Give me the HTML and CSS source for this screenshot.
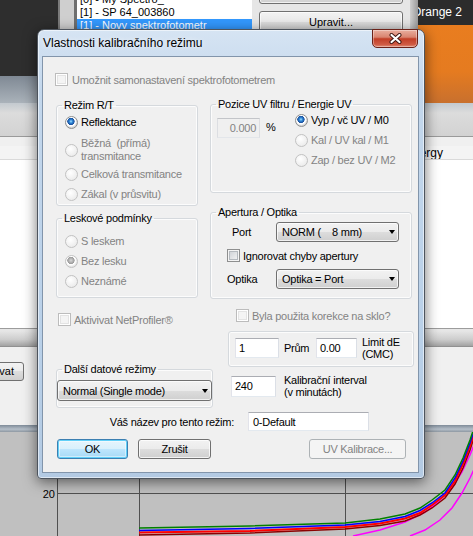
FILE: index.html
```html
<!DOCTYPE html>
<html lang="cs">
<head>
<meta charset="utf-8">
<title>Vlastnosti kalibračního režimu</title>
<link rel="stylesheet" href="styles.css">
</head>
<body>
<div class="desk">
  <div class="top">
    <div class="top-main">
      <div class="top-dark">
        <div class="dark-gap"></div>
        <div class="list-frame"></div>
        <div class="list">
          <div class="li">[0] - My Spectro_</div>
          <div class="li">[1] - SP 64_003860</div>
          <div class="li sel">[1] - Novy spektrofotometr</div>
        </div>
        <div class="btnpanel">
          <div class="bgbtn bgbtn-top"></div>
          <div class="bgbtn">Upravit...</div>
        </div>
        <div class="panel-edge"></div>
      </div>
      <div class="top-band"></div>
    </div>
    <div class="swatch">
      <div class="swatch-name">Orange 2</div>
      <div class="swatch-color"></div>
    </div>
  </div>
  <div class="toolbar"></div>
  <div class="hdr-gap"></div>
  <div class="hdr"><span class="hdr-cell">Energy</span></div>
  <div class="listarea"></div>
  <div class="band"></div>
  <div class="lower"><div class="bgbtn2">Aktualizovat</div></div>
  <div class="band2"></div>
  <div class="chart">
    <svg class="chart-svg" width="473" height="104" viewBox="0 0 473 104">
      <g stroke="#505050" stroke-width="1" fill="none">
        <line x1="57.5" y1="0" x2="57.5" y2="104"/>
        <line x1="139.5" y1="0" x2="139.5" y2="104"/>
        <line x1="345.5" y1="0" x2="345.5" y2="104"/>
        <line x1="57" y1="61.5" x2="473" y2="61.5"/>
      </g>
      <text x="55" y="66" text-anchor="end" class="axis-label">20</text>
      <g fill="none" stroke-width="1.5">
        <polyline stroke="#ff00ff" points="353,104 380,98 405,90 425,80 440,68 452,56 462,40 470,23 476,8"/>
        <polyline stroke="#ff00ff" points="410,104 425,98 440,88 452,76 462,61 470,46 476,33"/>
        <polyline stroke="#8b0000" points="139,103 250,101 345,97 380,93.5 405,89 420,83 432,76 445,66 455,52 463,36 470,18 477,-4"/>
        <polyline stroke="#ff0000" stroke-width="2" points="139,100.5 250,99 345,95 380,91.5 405,86.5 420,81 432,73 445,63 455,49 463,32 470,14 476,-4"/>
        <polyline stroke="#0000ff" points="139,98.5 250,96.5 345,93 380,89.5 405,84.5 420,78.5 432,71 445,61 455,46 463,29 470,11 475,-4"/>
        <polyline stroke="#008000" points="139,96 250,94 345,91 380,87 405,82 420,76 432,68 445,58 455,43 463,26 470,8 474,-4"/>
      </g>
    </svg>
  </div>
</div>

<div class="dialog">
  <div class="titlebar">
    <div class="title">Vlastnosti kalibračního režimu</div>
    <div class="close">
      <svg width="13" height="11" viewBox="0 0 13 11">
        <g stroke-linecap="round">
          <path d="M2.5 2 L10.5 9 M10.5 2 L2.5 9" stroke="#3b1410" stroke-width="4"/>
          <path d="M2.5 2 L10.5 9 M10.5 2 L2.5 9" stroke="#ffffff" stroke-width="2.2"/>
        </g>
      </svg>
    </div>
  </div>
  <div class="client">
    <div class="chk-row row-a dis"><span class="chk chk-dis"></span><span>Umožnit samonastavení spektrofotometrem</span></div>

    <div class="row-b">
      <fieldset class="group g-rt">
        <legend>Režim R/T</legend>
        <div class="opts opts-rt">
          <div class="opt"><span class="radio radio-on"></span><span>Reflektance</span></div>
          <div class="opt opt-two dis"><span class="radio radio-dis"></span><span class="two">Běžná&nbsp; (přímá)<br>transmitance</span></div>
          <div class="opt dis"><span class="radio radio-dis"></span><span>Celková transmitance</span></div>
          <div class="opt dis"><span class="radio radio-dis"></span><span>Zákal (v průsvitu)</span></div>
        </div>
      </fieldset>
      <fieldset class="group g-uv">
        <legend>Pozice UV filtru / Energie UV</legend>
        <div class="uv-grid">
          <div class="tb tb-dis uv-tb">0.000</div>
          <div class="pct">%</div>
          <div class="uv-opts">
            <div class="opt"><span class="radio radio-on"></span><span>Vyp / vč UV / M0</span></div>
            <div class="opt dis"><span class="radio radio-dis"></span><span>Kal / UV kal / M1</span></div>
            <div class="opt dis"><span class="radio radio-dis"></span><span>Zap / bez UV / M2</span></div>
          </div>
        </div>
      </fieldset>
    </div>

    <div class="row-c">
      <fieldset class="group g-gloss">
        <legend>Leskové podmínky</legend>
        <div class="opts opts-gloss">
          <div class="opt dis"><span class="radio radio-dis"></span><span>S leskem</span></div>
          <div class="opt dis"><span class="radio radio-dis-on"></span><span>Bez lesku</span></div>
          <div class="opt dis"><span class="radio radio-dis"></span><span>Neznámé</span></div>
        </div>
      </fieldset>
      <fieldset class="group g-ap">
        <legend>Apertura / Optika</legend>
        <div class="ap">
          <div class="ap-row">
            <span class="ap-port">Port</span>
            <div class="combo"><span class="combo-text">NORM (    8 mm)</span><span class="arrow"></span></div>
          </div>
          <div class="chk-row ap-chk"><span class="chk"></span><span>Ignorovat chyby apertury</span></div>
          <div class="ap-row ap-row2">
            <span>Optika</span>
            <div class="combo"><span class="combo-text">Optika = Port</span><span class="arrow"></span></div>
          </div>
        </div>
      </fieldset>
    </div>

    <div class="row-d">
      <div class="col-left">
        <div class="chk-row net dis"><span class="chk chk-dis"></span><span>Aktivivat NetProfiler®</span></div>
        <fieldset class="group g-data">
          <legend>Další datové režimy</legend>
          <div class="combo data-combo"><span class="combo-text">Normal (Single mode)</span><span class="arrow"></span></div>
        </fieldset>
      </div>
      <div class="col-right">
        <div class="chk-row byla dis"><span class="chk chk-dis"></span><span>Byla použita korekce na sklo?</span></div>
        <fieldset class="group g-cmc">
          <div class="cmc-grid">
            <div class="tb">1</div>
            <span class="prum">Prům</span>
            <div class="tb">0.00</div>
            <span class="lim">Limit dE<br>(CMC)</span>
          </div>
        </fieldset>
        <div class="int-row">
          <div class="tb int-tb">240</div>
          <span class="int-text">Kalibrační interval<br>(v minutách)</span>
        </div>
      </div>
    </div>

    <div class="name-row">
      <span class="name-label">Váš název pro tento režim:</span>
      <div class="tb name-tb">0-Default</div>
    </div>

    <div class="btn-row">
      <div class="btn btn-def btn-ok">OK</div>
      <div class="btn btn-cancel">Zrušit</div>
      <div class="btn btn-dis btn-uv">UV Kalibrace...</div>
    </div>
  </div>
</div>
</body>
</html>
```

FILE: styles.css
```css
* { box-sizing: border-box; }
html, body { margin: 0; padding: 0; }
body {
  width: 473px;
  height: 536px;
  overflow: hidden;
  position: relative;
  font-family: "Liberation Sans", Arial, sans-serif;
  font-size: 11px;
  color: #000;
  background: #c0c0c0;
}

/* ---------- background application ---------- */
.desk { display: flex; flex-direction: column; width: 473px; height: 536px; }
.top { display: flex; height: 103px; flex: none; }
.top-main { flex: 1; display: flex; flex-direction: column; min-width: 0; }
.top-dark { height: 76px; flex: none; display: flex; background: #2e2e2e; overflow: hidden; }
.dark-gap { width: 58px; flex: none; }
.list-frame {
  width: 19px; flex: none;
  background: linear-gradient(to right, #7b7b7b 0 2px, #cfcfcf 2px 16px, #6f6f6f 16px 19px);
}
.list { width: 175px; flex: none; background: #fff; line-height: 13px; overflow: hidden; font-size: 11px; }
.li { height: 13px; padding-left: 3px; white-space: nowrap; }
.li:first-child { margin-top: -7px; }
.li.sel { background: #3399ff; color: #fff; }
.btnpanel { width: 158px; flex: none; background: #e6e6e6; padding-left: 7px; display: flex; flex-direction: column; }
.bgbtn {
  width: 144px; height: 22px; margin-top: 7px; flex: none;
  border: 1px solid #707070; border-radius: 3px;
  background: linear-gradient(#f2f2f2, #ebebeb 50%, #dddddd 50%, #cfcfcf);
  box-shadow: inset 0 0 0 1px rgba(255,255,255,.7);
  text-align: center; line-height: 20px; font-size: 11px;
}
.bgbtn-top { margin-top: -12px; height: 16px; }
.panel-edge { width: 8px; flex: none; background: linear-gradient(to right, #cfcfcf, #9a9a9a); }
.top-band { flex: 1; background: linear-gradient(#7f8994, #aab2ba); }
.swatch { width: 55px; flex: none; display: flex; flex-direction: column; }
.swatch-name {
  height: 25px; flex: none; background: #2c2c2c; color: #fff;
  font-size: 12px; line-height: 25px; text-indent: -6px; white-space: nowrap; overflow: hidden;
}
.swatch-color { flex: 1; background: linear-gradient(#e97d1f, #e57b20 60%, #c8702e); }

.toolbar { height: 34px; flex: none; background: linear-gradient(#c3c9cf, #dcdcdc 30%, #d2d2d2); border-bottom: 1px solid #9a9a9a; }
.hdr-gap { height: 9px; flex: none; background: #f0f0f0; }
.hdr { height: 14px; flex: none; background: #f4f4f4; border-bottom: 1px solid #dadada; display: flex; align-items: center; overflow: hidden; white-space: nowrap; font-size: 12px; }
.hdr-cell { margin-left: 405px; }
.listarea { height: 168px; flex: none; background: #fff; }
.band { height: 19px; flex: none; background: linear-gradient(#9c9c9c 0 1px, #e6e6e6 1px 3px, #cdcdcd 60%, #a2a2a2 95%, #7d7d7d); }
.lower { height: 78px; flex: none; background: #f0f0f0; padding-top: 15px; }
.bgbtn2 {
  width: 80px; height: 19px; margin-left: -56px;
  border: 1px solid #707070; border-radius: 3px;
  background: linear-gradient(#f2f2f2, #ebebeb 50%, #dddddd 50%, #cfcfcf);
  text-align: right; padding-right: 9px; line-height: 17px; font-size: 11px;
}
.band2 { height: 7px; flex: none; background: linear-gradient(#7f8b98, #b4bec8 60%, #8e98a2); }
.chart { height: 104px; flex: none; background: #c0c0c0; }
.chart-svg { display: block; }
.axis-label { font-family: "Liberation Sans", Arial, sans-serif; font-size: 11px; fill: #000; }

/* ---------- dialog window ---------- */
.dialog {
  position: absolute; left: 37px; top: 29px;
  width: 388px; height: 450px;
  border: 1px solid #4d545d; border-radius: 7px 7px 4px 4px;
  background: linear-gradient(#d6e4f3, #c3d7ec 60px, #b9d0e8 70%, #b3cae3);
  box-shadow: 0 3px 14px rgba(0,0,0,.55), inset 0 0 0 1px rgba(255,255,255,.55);
  padding: 0 5px 5px 4px;
  display: flex; flex-direction: column;
}
.titlebar { height: 26px; flex: none; display: flex; align-items: center; padding-left: 1px; }
.title { flex: 1; font-size: 12px; color: #000; text-shadow: 0 0 5px rgba(255,255,255,.9); white-space: nowrap; }
.close {
  align-self: flex-start; margin-top: -1px; margin-right: 1px;
  width: 46px; height: 19px; flex: none;
  border: 1px solid #6b2219; border-radius: 0 0 5px 5px;
  background: linear-gradient(#e9ae9f, #d98470 42%, #c23e27 52%, #cf5b44 85%, #e08d78);
  box-shadow: inset 0 0 0 1px rgba(255,255,255,.35);
  display: flex; align-items: center; justify-content: center;
}
.close svg { display: block; }

.client {
  flex: 1; background: #f0f0f0;
  border: 1px solid #8295ab;
  padding: 16px 0 0 13px;
  display: flex; flex-direction: column; align-items: flex-start;
  letter-spacing: -0.25px;
}
.dis { color: #838383; }

/* checkbox / radio glyphs */
.chk-row { display: flex; align-items: center; height: 13px; gap: 3px; white-space: nowrap; }
.chk {
  width: 13px; height: 13px; flex: none;
  border: 1px solid #8e8f8f;
  background: linear-gradient(135deg, #c8ccd1, #f8f8f8);
  box-shadow: inset 0 0 0 1px #f4f4f4, inset 0 0 0 2px #b4b9be;
}
.chk-dis { border-color: #bcbcbc; background: #f4f4f4; box-shadow: inset 0 0 0 1px #fff, inset 0 0 0 2px #e3e3e3; }
.row-a { margin-left: -1px; gap: 4px; }

.radio {
  width: 13px; height: 13px; flex: none; border-radius: 50%;
  border: 1px solid #8e8f8f;
  background: radial-gradient(circle at 40% 35%, #fff, #dcdcdc 75%);
  margin-right: 3px;
}
.radio-on {
  background: radial-gradient(circle at 45% 40%, #a5e2ff 0, #2f88d8 1.6px, #1b4f9c 3.4px, #fff 3.9px, #fbfbfb 4.8px, #d6d6d6 6px);
}
.radio-dis { border-color: #c2c2c2; background: radial-gradient(circle at 40% 35%, #fff, #ececec 75%); }
.radio-dis-on {
  border-color: #c2c2c2;
  background: radial-gradient(circle at 45% 40%, #d8d8d8 0, #9a9a9a 3.4px, #fff 3.9px, #fbfbfb 4.8px, #e6e6e6 6px);
}

/* group boxes */
.group {
  margin: 0; padding: 0; min-width: 0;
  border: 1px solid #d5d9dd; border-radius: 3px;
  box-shadow: inset 0 0 0 1px rgba(255,255,255,.8);
}
.group > legend { margin-left: 5px; padding: 0 2px; line-height: 13px; font-size: 11px; }

.opt { display: flex; align-items: center; height: 20px; white-space: nowrap; }
.two { line-height: 13px; }

.row-b { display: grid; grid-template-columns: 142px 202px; column-gap: 12px; align-items: start; margin-top: 12px; }
.g-rt { margin-top: 1px; }
.opts-rt { padding: 0 0 1px 8px; }
.opt-two { height: 28px; margin-top: 4px; }

.uv-grid { display: grid; grid-template-columns: 43px 23px 1fr; column-gap: 6px; padding: 0 0 22px 6px; align-items: start; }
.uv-tb { margin-top: 7px; height: 22px; justify-content: flex-end; padding-right: 6px; }
.pct { margin-top: 10px; line-height: 13px; }
.uv-opts { margin-top: -1px; }

.row-c { display: grid; grid-template-columns: 142px 202px; column-gap: 12px; align-items: start; }
.g-gloss { margin-top: 6px; }
.opts-gloss { padding: 6px 0 6px 8px; }
.ap { padding: 3px 0 9px 16px; }
.ap-row { display: grid; grid-template-columns: 49px 123px; align-items: center; height: 20px; }
.ap-port { padding-left: 5px; }
.ap-chk { margin-top: 7px; }
.ap-row2 { margin-top: 7px; }

/* inputs */
.tb {
  height: 20px; display: flex; align-items: center;
  border: 1px solid; border-color: #abadb3 #dbdfe6 #e3e9ef #e2e3ea;
  background: #fff; padding: 0 3px; white-space: nowrap;
}
.tb-dis { background: #f0f0f0; border-color: #c3c5c9 #dcdee2 #e3e6ea #dcdee2; color: #838383; }

.combo {
  display: flex; align-items: center; height: 20px;
  border: 1px solid #707070; border-radius: 3px;
  background: linear-gradient(#f2f2f2, #ebebeb 50%, #dddddd 50%, #cfcfcf);
  box-shadow: inset 0 0 0 1px rgba(255,255,255,.7);
  padding: 0 3px 0 5px;
}
.combo-text { flex: 1; white-space: pre; }
.arrow { width: 0; height: 0; border-left: 3.5px solid transparent; border-right: 3.5px solid transparent; border-top: 4px solid #000; }

.row-d { display: grid; grid-template-columns: 157px 186px; column-gap: 15px; align-items: start; margin-top: 10px; }
.col-left, .col-right { display: flex; flex-direction: column; align-items: stretch; }
.net { margin: 4px 0 0 2px; }
.g-data { margin-top: 37px; }
.data-combo { margin: 4px 0 6px 0; width: 155px; height: 21px; }
.byla { margin-left: 8px; }
.g-cmc { margin-top: 9px; padding: 4px 0 6px 6px; }
.cmc-grid { display: grid; grid-template-columns: 44px 27px 41px auto; column-gap: 5px; align-items: center; }
.prum { align-self: start; padding-top: 6px; line-height: 13px; }
.lim { line-height: 12px; white-space: nowrap; }
.int-row { display: flex; align-items: center; gap: 8px; margin: 7px 0 0 3px; }
.int-tb { width: 45px; height: 21px; }
.int-text { line-height: 12px; white-space: nowrap; }

.name-row { display: flex; align-items: center; margin-top: 4px; }
.name-label { width: 178px; text-align: right; white-space: nowrap; }
.name-tb { width: 121px; height: 19px; margin-left: 14px; padding-left: 4px; }

.btn-row { display: flex; margin-top: 8px; }
.btn {
  height: 20px; display: flex; align-items: center; justify-content: center;
  border: 1px solid #707070; border-radius: 3px;
  background: linear-gradient(#f2f2f2, #ebebeb 50%, #dddddd 50%, #cfcfcf);
  box-shadow: inset 0 0 0 1px rgba(255,255,255,.75);
  white-space: nowrap;
}
.btn-def {
  border-color: #3c7fb1;
  background: linear-gradient(#e6f5fd, #d9f0fc 50%, #bee6fd 50%, #a7d9f5);
  box-shadow: inset 0 0 0 1px #62d0f8, inset 0 0 0 2px rgba(255,255,255,.45);
}
.btn-dis { border-color: #adb2b5; background: #f4f4f4; color: #838383; box-shadow: none; }
.btn-ok { margin-left: 1px; width: 71px; }
.btn-cancel { margin-left: 10px; width: 73px; }
.btn-uv { margin-left: 98px; width: 97px; }
```
